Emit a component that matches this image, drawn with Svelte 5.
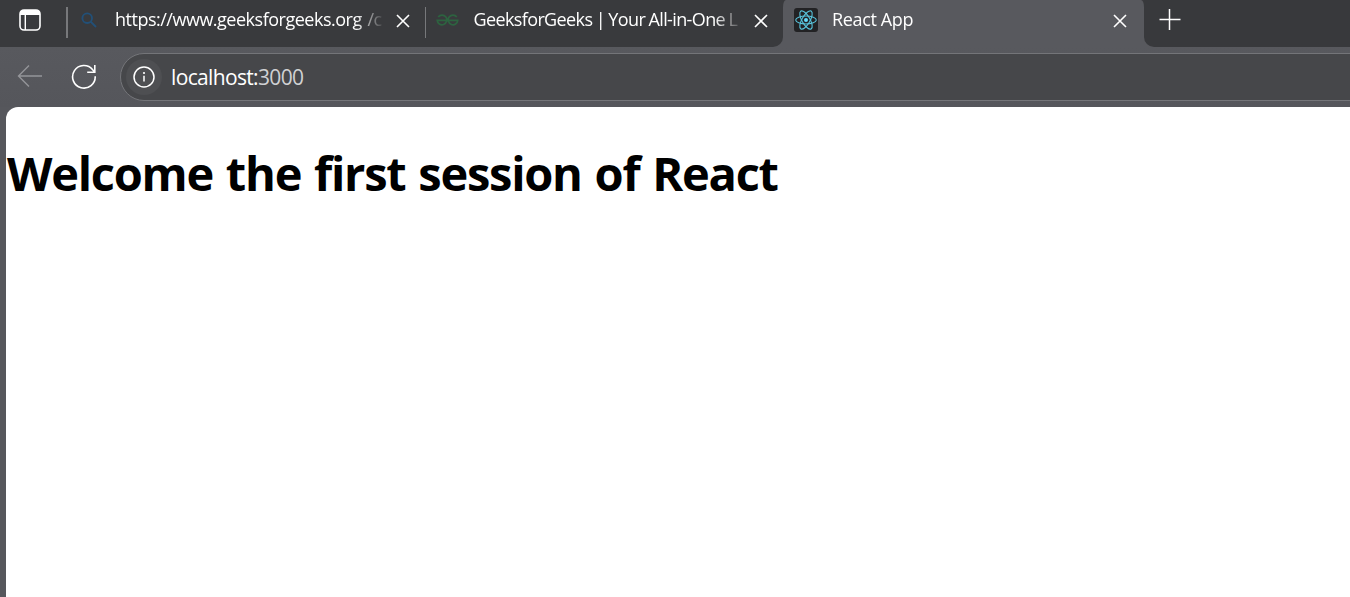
<script>
  const tabs = [
    { title: 'https://www.geeksforgeeks.org /c', icon: 'search', spacing: -0.49, word: 1.5 },
    { title: 'GeeksforGeeks | Your All-in-One L', icon: 'gfg', spacing: -0.62, word: -0.7 }
  ];
</script>

{#snippet close()}
  <svg class="close" width="14" height="14" viewBox="0 0 14 14"><path d="M1 1 13 13M13 1 1 13" stroke="#fff" stroke-width="1.6" fill="none" /></svg>
{/snippet}

<div class="browser">
  <div class="strip">
    <div class="left">
      <div class="workspace">
        <svg width="24" height="24" viewBox="0 0 24 24">
          <rect x="2" y="2" width="20" height="20" rx="4" fill="none" stroke="#fff" stroke-width="1.6" />
          <path d="M2 7V6Q2 2 6 2H18Q22 2 22 6V7Z" fill="#fff" />
          <path d="M7.3 7V22" stroke="#fff" stroke-width="1.4" />
        </svg>
      </div>
      {#each tabs as tab}
        <div class="tab">
          <div class="favicon">
            {#if tab.icon === 'search'}
              <svg width="16" height="16" viewBox="0 0 16 16" fill="none" stroke="#225078" stroke-width="1.9"><circle cx="6.2" cy="6.2" r="4.8" /><path d="M9.7 9.7 15 15" /></svg>
            {:else}
              <svg width="23" height="12" viewBox="0 0 23 12" fill="none" stroke="#2d6340" stroke-width="1.7"><path d="M2.2 3A4.8 4.8 0 1 1 1.2 6.3H21.8A4.8 4.8 0 1 1 20.8 3" /></svg>
            {/if}
          </div>
          <div class="title" style="letter-spacing: {tab.spacing}px; word-spacing: {tab.word}px">{tab.title}</div>
          {@render close()}
        </div>
      {/each}
    </div>
    <div class="tab active">
      <div class="react">
        <svg width="24" height="24" viewBox="-12 -12 24 24" fill="none" stroke="#58c4dc" stroke-width="1.1">
          <ellipse rx="10.3" ry="4" /><ellipse rx="10.3" ry="4" transform="rotate(60)" /><ellipse rx="10.3" ry="4" transform="rotate(120)" />
          <circle r="2" fill="#61dafb" stroke="none" />
        </svg>
      </div>
      <div class="title plain">React App</div>
      {@render close()}
    </div>
    <div class="right">
      <svg width="22" height="22" viewBox="0 0 22 22"><path d="M.5 10.5H21.5M10.5 0V21" stroke="#fff" stroke-width="1.5" /></svg>
    </div>
  </div>

  <div class="toolbar">
    <svg class="back" width="26" height="24" viewBox="0 0 26 24" fill="none" stroke="#949599" stroke-width="1.4"><path d="M12 1.5 1.5 12 12 22.5M1.5 12H25" /></svg>
    <svg class="reload" width="26" height="26" viewBox="0 0 26 26" fill="none" stroke="#fff" stroke-width="1.6"><path d="M24.2 12.2A11.3 11.3 0 1 1 21.7 5.7L23.7 8M23.8 1V8.3H16.2" /></svg>
    <div class="address">
      <div class="info">
        <svg width="22" height="22" viewBox="0 0 22 22"><circle cx="11" cy="11" r="10" fill="none" stroke="#fff" stroke-width="1.5" /><path d="M11 9.8V15.5" stroke="#fff" stroke-width="1.5" /><circle cx="11" cy="7" r="1.1" fill="#fff" /></svg>
      </div>
      <div class="url">localhost:<span>3000</span></div>
    </div>
  </div>

  <main><h1>Welcome the first session of React</h1></main>
</div>

<style>
  :global(body) { margin: 0; overflow: hidden; }
  .browser {
    width: 1350px; height: 597px; overflow: hidden;
    display: flex; flex-direction: column;
    background: #56575c;
    font-family: 'Segoe UI', 'Open Sans', 'Noto Sans', sans-serif;
  }
  svg { display: block; flex: none; }
  .strip { display: flex; height: 47px; background: linear-gradient(#393a3d 20px, #58595e 20px); }
  .left { display: flex; box-sizing: border-box; width: 783px; background: #393a3d; border-bottom-right-radius: 10px; }
  .workspace { box-sizing: border-box; width: 66px; padding: 8px 0 0 18px; }
  .tab { display: flex; position: relative; box-sizing: border-box; width: 358.5px; padding-left: 11px; }
  .tab:not(.active)::before { content: ''; position: absolute; left: 0; top: 7px; width: 1.5px; height: 31px; background: #77787b; }
  .favicon { display: flex; justify-content: center; align-items: center; width: 23px; height: 40px; }
  .title {
    width: 270px; margin-left: 15px; height: 38px; line-height: 38px;
    font-size: 18px; color: #fff; white-space: nowrap;
    -webkit-mask-image: linear-gradient(90deg, #000 240px, transparent 270px);
    mask-image: linear-gradient(90deg, #000 240px, transparent 270px);
  }
  .close { margin: 14px 0 0 10.5px; }
  .active { width: 361px; background: #58595e; border-radius: 3px 3px 0 0 / 7px 7px 0 0; }
  .react { width: 24px; height: 24px; margin-top: 8px; border-radius: 3px; background: #222224; }
  .plain { margin-left: 14px; letter-spacing: -0.35px; }
  .right { flex: 1; background: #38393c; border-bottom-left-radius: 10px; padding: 9px 0 0 14.5px; }
  .toolbar { display: flex; flex: none; height: 60px; background: linear-gradient(#58595e, #55565b); }
  .back { margin: 17px 0 0 17px; }
  .reload { margin: 17px 0 0 28px; }
  .address {
    display: flex; flex: none; box-sizing: border-box; width: 1280px; height: 48px; margin: 6px 0 0 23px;
    border: 1.5px solid #747579; border-radius: 24px; background: #46474a;
  }
  .info { display: flex; align-items: center; justify-content: center; width: 36px; height: 36px; margin: 5px 0 0 5px; border-radius: 50%; background: #4e4f52; }
  .url { margin-left: 9px; line-height: 46px; font-size: 21px; letter-spacing: -0.65px; color: #fff; }
  .url span { color: #d0d1d3; }
  main { flex: 1; margin-left: 6px; background: #fff; border-top-left-radius: 12px; }
  h1 { margin: 34px 0 0 1px; font-size: 47px; line-height: 64px; font-weight: 700; letter-spacing: -1.25px; word-spacing: 1.9px; color: #000; white-space: nowrap; }
</style>
